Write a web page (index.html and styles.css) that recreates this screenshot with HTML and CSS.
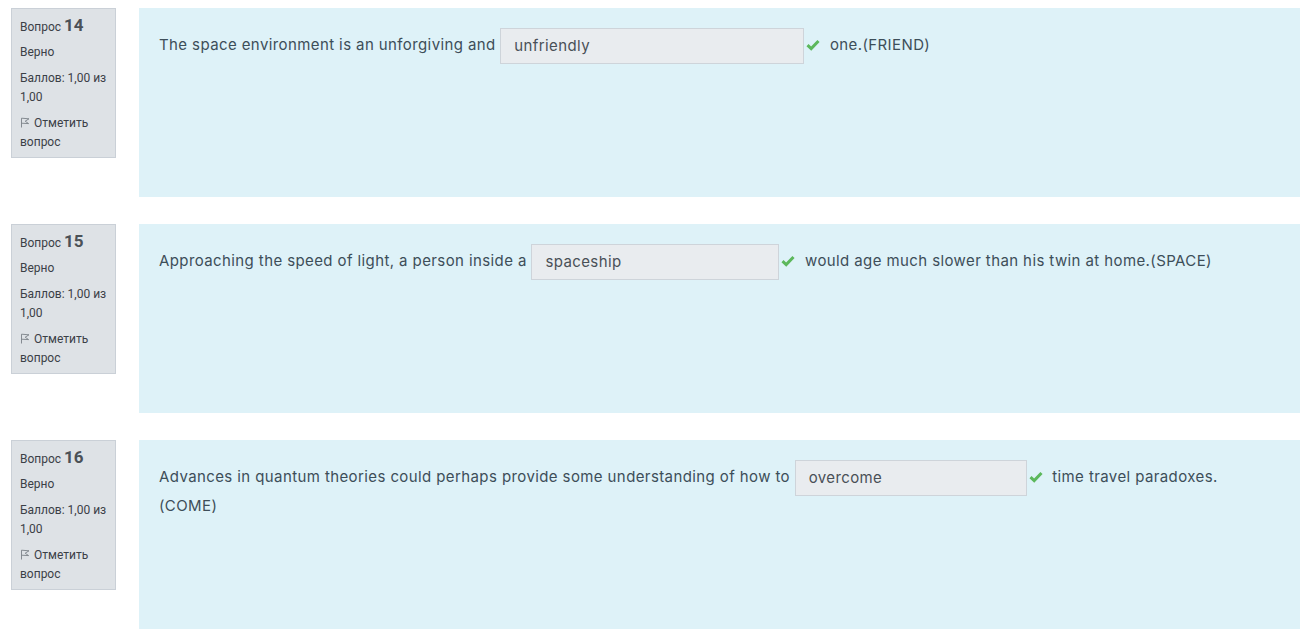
FILE: index.html
```html
<!DOCTYPE html>
<html>
  <head>
    <meta charset="utf-8">
    <title>Тест</title>
    <link rel="stylesheet" href="styles.css">
  </head>
  <body>
    <div class="que">
      <div class="info">
        <h3 class="no">Вопрос <span class="qno">14</span></h3>
        <div class="state">Верно</div>
        <div class="grade">Баллов: 1,00 из 1,00</div>
        <div class="flag">
          <svg class="flag-icon" width="10" height="11" viewBox="0 0 10 11"><path d="M1.5 10.5V1.2L9 1.8 5.2 4.2 8.6 6.6 1.5 6.2" fill="none" stroke="#7b8188" stroke-width="0.9"/></svg>
          Отметить вопрос
        </div>
      </div>
      <div class="content">
        <p class="qtext">The space environment is an unforgiving and <span class="answer">unfriendly</span><svg class="check" width="14" height="12" viewBox="0 0 14 12"><path d="M1.5 6.2 5.2 9.6 12.5 2" fill="none" stroke="#5cb85c" stroke-width="3"/></svg> one.(FRIEND)</p>
      </div>
    </div>
    <div class="que">
      <div class="info">
        <h3 class="no">Вопрос <span class="qno">15</span></h3>
        <div class="state">Верно</div>
        <div class="grade">Баллов: 1,00 из 1,00</div>
        <div class="flag">
          <svg class="flag-icon" width="10" height="11" viewBox="0 0 10 11"><path d="M1.5 10.5V1.2L9 1.8 5.2 4.2 8.6 6.6 1.5 6.2" fill="none" stroke="#7b8188" stroke-width="0.9"/></svg>
          Отметить вопрос
        </div>
      </div>
      <div class="content">
        <p class="qtext">Approaching the speed of light, a person inside a <span class="answer a2">spaceship</span><svg class="check" width="14" height="12" viewBox="0 0 14 12"><path d="M1.5 6.2 5.2 9.6 12.5 2" fill="none" stroke="#5cb85c" stroke-width="3"/></svg> would age much slower than his twin at home.(SPACE)</p>
      </div>
    </div>
    <div class="que">
      <div class="info">
        <h3 class="no">Вопрос <span class="qno">16</span></h3>
        <div class="state">Верно</div>
        <div class="grade">Баллов: 1,00 из 1,00</div>
        <div class="flag">
          <svg class="flag-icon" width="10" height="11" viewBox="0 0 10 11"><path d="M1.5 10.5V1.2L9 1.8 5.2 4.2 8.6 6.6 1.5 6.2" fill="none" stroke="#7b8188" stroke-width="0.9"/></svg>
          Отметить вопрос
        </div>
      </div>
      <div class="content">
        <p class="qtext">Advances in quantum theories could perhaps provide some understanding of how to <span class="answer a3">overcome</span><svg class="check" width="14" height="12" viewBox="0 0 14 12"><path d="M1.5 6.2 5.2 9.6 12.5 2" fill="none" stroke="#5cb85c" stroke-width="3"/></svg> time travel paradoxes.<span class="tail">(COME)</span></p>
      </div>
    </div>
  </body>
</html>
```
FILE: styles.css
```css
* {
  margin: 0;
  padding: 0;
  box-sizing: border-box;
}

body {
  background: #fff;
  padding: 8px 7px 0 11px;
  font-family: Roboto, "Liberation Sans", sans-serif;
}

.que {
  display: flex;
  align-items: flex-start;
  gap: 23px;
  margin-bottom: 27px;
}

.info {
  flex: 0 0 105px;
  height: 150px;
  padding: 7px 8px;
  background: #dee2e6;
  border: 1px solid #cad0d7;
  color: #3b4046;
  font-size: 12px;
  line-height: 19px;
}

.no {
  font-weight: normal;
  font-size: 12px;
  margin-bottom: 6px;
}

.qno {
  font-size: 17px;
  font-weight: bold;
  color: #4b5157;
}

.state {
  margin-bottom: 7px;
}

.grade {
  margin-bottom: 7px;
}

.flag-icon {
  vertical-align: -1px;
  margin-right: 1px;
}

.content {
  flex: 1;
  height: 189px;
  background: #def2f8;
  padding: 23px 30px 18px 20px;
}

.qtext {
  font-family: Inter, "Noto Sans", sans-serif;
  font-size: 15px;
  line-height: 28px;
  letter-spacing: 0.4px;
  color: #3d4e59;
}

.answer {
  display: inline-block;
  vertical-align: middle;
  width: 304px;
  height: 36px;
  line-height: 20px;
  padding: 7px 13px;
  background: #e9ecef;
  border: 1px solid #ced4da;
  color: #495057;
  margin: -4px 0 -4px;
}

.a2 {
  width: 248px;
}

.a3 {
  width: 232px;
}

.check {
  vertical-align: -1px;
  margin: 0 5px 0 2px;
}
```
